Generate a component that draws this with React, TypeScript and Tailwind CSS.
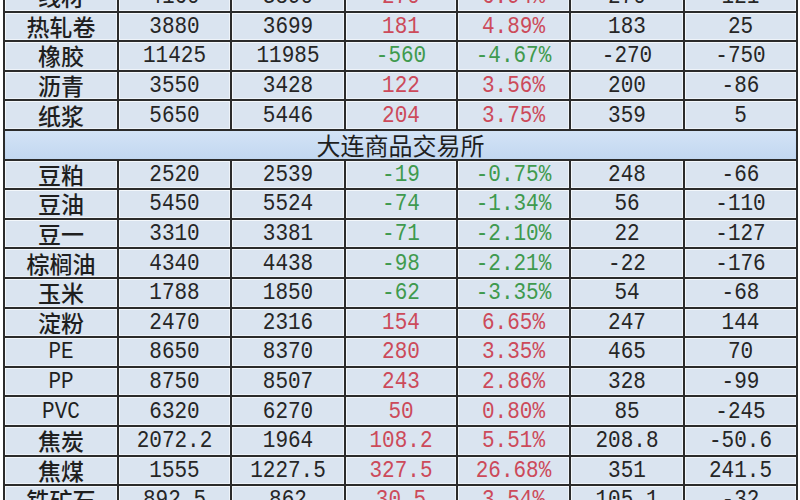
import React from 'react';

type Row = [string, string, string, string, string, string, string];

const TOP_ROWS: Row[] = [
  ['线材', '4160', '3890', '270', '6.94%', '270', '121'],
  ['热轧卷', '3880', '3699', '181', '4.89%', '183', '25'],
  ['橡胶', '11425', '11985', '-560', '-4.67%', '-270', '-750'],
  ['沥青', '3550', '3428', '122', '3.56%', '200', '-86'],
  ['纸浆', '5650', '5446', '204', '3.75%', '359', '5'],
];

const DCE_ROWS: Row[] = [
  ['豆粕', '2520', '2539', '-19', '-0.75%', '248', '-66'],
  ['豆油', '5450', '5524', '-74', '-1.34%', '56', '-110'],
  ['豆一', '3310', '3381', '-71', '-2.10%', '22', '-127'],
  ['棕榈油', '4340', '4438', '-98', '-2.21%', '-22', '-176'],
  ['玉米', '1788', '1850', '-62', '-3.35%', '54', '-68'],
  ['淀粉', '2470', '2316', '154', '6.65%', '247', '144'],
  ['PE', '8650', '8370', '280', '3.35%', '465', '70'],
  ['PP', '8750', '8507', '243', '2.86%', '328', '-99'],
  ['PVC', '6320', '6270', '50', '0.80%', '85', '-245'],
  ['焦炭', '2072.2', '1964', '108.2', '5.51%', '208.8', '-50.6'],
  ['焦煤', '1555', '1227.5', '327.5', '26.68%', '351', '241.5'],
  ['铁矿石', '892.5', '862', '30.5', '3.54%', '105.1', '-32'],
];

const cell =
  'flex items-center justify-center overflow-hidden border-r-2 border-[#2b2b2b] bg-[#dae4f0] shadow-[inset_1px_1px_0_#f3f7fb,inset_-1px_-1px_0_#eef3f9]';

const Num: React.FC<{ v: string; className?: string }> = ({ v, className = 'text-[#262626]' }) => (
  <div className={`${cell} ${className}`}>
    <span className="inline-block scale-y-[1.15]">{v}</span>
  </div>
);

const DataRow: React.FC<{ row: Row }> = ({ row }) => {
  const down = row[3].startsWith('-');
  const tone = down ? 'text-[#3f9a4e]' : 'text-[#cc4a5a]';
  const latin = /^[A-Z]/.test(row[0]);
  return (
    <div className="grid h-[29.6px] grid-cols-[114px_113px_114px_112px_113px_114px_113px] border-b-2 border-[#2b2b2b]">
      {latin ? (
        <Num v={row[0]} className="text-[#1f1f1f]" />
      ) : (
        <div className={`${cell} font-['Noto_Sans_CJK_SC',sans-serif] text-[23px] font-medium text-[#1f1f1f]`}>
          {row[0]}
        </div>
      )}
      <Num v={row[1]} />
      <Num v={row[2]} />
      <Num v={row[3]} className={tone} />
      <Num v={row[4]} className={tone} />
      <Num v={row[5]} />
      <Num v={row[6]} />
    </div>
  );
};

export default function App() {
  return (
    <div className="h-[500px] w-[800px] overflow-hidden bg-white pl-[3px]">
      <div className="-mt-[17px] w-[795px] border-l-2 border-[#2b2b2b] font-['Liberation_Mono',monospace] text-[21px] leading-none">
        {TOP_ROWS.map((r) => (
          <DataRow key={r[0]} row={r} />
        ))}
        <div className="flex h-[29.6px] items-center justify-center border-r-2 border-b-2 border-[#2b2b2b] bg-gradient-to-b from-[#d3e3f6] to-[#c2d7f0] font-['Noto_Sans_CJK_SC',sans-serif] text-[24px] text-[#1f1f1f]">
          大连商品交易所
        </div>
        {DCE_ROWS.map((r) => (
          <DataRow key={r[0]} row={r} />
        ))}
      </div>
    </div>
  );
}
